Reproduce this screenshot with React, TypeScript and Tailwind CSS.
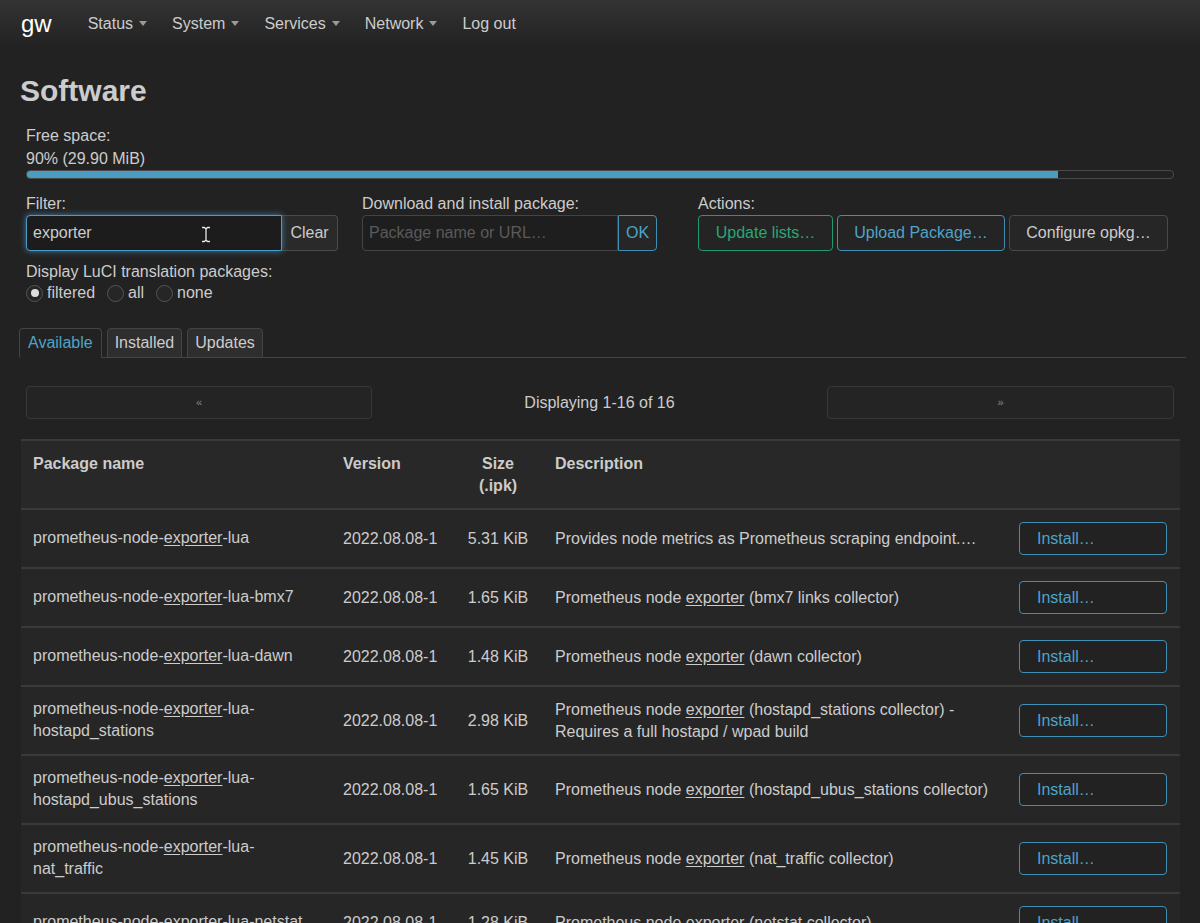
import React from 'react';

const rows = [
    { name: ['prometheus-node-', 'exporter', '-lua'], ver: '2022.08.08-1', size: '5.31 KiB', desc: ['Provides node metrics as Prometheus scraping endpoint.…'] },
    { name: ['prometheus-node-', 'exporter', '-lua-bmx7'], ver: '2022.08.08-1', size: '1.65 KiB', desc: ['Prometheus node ', 'exporter', ' (bmx7 links collector)'] },
    { name: ['prometheus-node-', 'exporter', '-lua-dawn'], ver: '2022.08.08-1', size: '1.48 KiB', desc: ['Prometheus node ', 'exporter', ' (dawn collector)'] },
    { name: ['prometheus-node-', 'exporter', '-lua-hostapd_stations'], ver: '2022.08.08-1', size: '2.98 KiB', desc: ['Prometheus node ', 'exporter', ' (hostapd_stations collector) - Requires a full hostapd / wpad build'] },
    { name: ['prometheus-node-', 'exporter', '-lua-hostapd_ubus_stations'], ver: '2022.08.08-1', size: '1.65 KiB', desc: ['Prometheus node ', 'exporter', ' (hostapd_ubus_stations collector)'] },
    { name: ['prometheus-node-', 'exporter', '-lua-nat_traffic'], ver: '2022.08.08-1', size: '1.45 KiB', desc: ['Prometheus node ', 'exporter', ' (nat_traffic collector)'] },
    { name: ['prometheus-node-', 'exporter', '-lua-netstat'], ver: '2022.08.08-1', size: '1.28 KiB', desc: ['Prometheus node ', 'exporter', ' (netstat collector)'] },
];

const Hl: React.FC<{ parts: string[] }> = ({ parts }) => (
    <>
        {parts.map((p, i) => (i % 2 === 1 ? <span key={i} className="underline underline-offset-2">{p}</span> : <span key={i}>{p}</span>))}
    </>
);

const Caret = () => <span className="ml-1.5 inline-block border-x-[4px] border-t-[5px] border-x-transparent border-t-[#9a9a9a] align-middle mb-[3px]" />;

// text cursor drawn over the filter field
const IBeam = () => (
    <svg className="absolute left-[174px] top-[10px]" width="10" height="17" viewBox="0 0 10 17">
        <path d="M1 1.5h2.5l1.5 1.5 1.5-1.5H9M5 3v11M1 15.5h2.5L5 14l1.5 1.5H9" fill="none" stroke="#111" strokeWidth="3" />
        <path d="M1 1.5h2.5l1.5 1.5 1.5-1.5H9M5 3v11M1 15.5h2.5L5 14l1.5 1.5H9" fill="none" stroke="#eee" strokeWidth="1.3" />
    </svg>
);

const Radio: React.FC<{ on?: boolean }> = ({ on }) => (
    <span className="w-[17px] h-[17px] rounded-full border border-[#555555] bg-[#262626] flex items-center justify-center mr-[4px]">
        {on && <span className="w-[8px] h-[8px] rounded-full bg-[#dddddd]" />}
    </span>
);

const App: React.FC = () => {
    return (
        <div className="min-h-screen bg-[#222222] text-[#cccccc] text-[16px]" style={{ fontFamily: '"Liberation Sans", Arial, sans-serif' }}>
            <header className="h-12 bg-gradient-to-b from-[#333333] to-[#222222] flex items-center px-[21px]">
                <span className="text-[24px] text-white mr-[36px] leading-none">gw</span>
                <nav className="flex items-center gap-[25px] text-[#cccccc]">
                    <span>Status<Caret /></span>
                    <span>System<Caret /></span>
                    <span>Services<Caret /></span>
                    <span>Network<Caret /></span>
                    <span>Log out</span>
                </nav>
            </header>

            <main className="px-[20px]">
                <h2 className="text-[30px] font-bold text-[#cccccc] mt-[25px] mb-[15px] leading-9">Software</h2>

                <div className="px-[6px]">
                    <div className="leading-[23px]">Free space:</div>
                    <div className="leading-[23px]">90% (29.90 MiB)</div>
                    <div className="h-[9px] border border-[#4a4a4a] rounded-[4px] overflow-hidden bg-[#222222]">
                        <div className="h-full bg-[#4a9dc0]" style={{ width: '90%' }} />
                    </div>

                    <div className="flex mt-[15px]">
                        <div className="w-[336px]">
                            <div className="leading-[20px]">Filter:</div>
                            <div className="flex h-[36px] mt-[1px]">
                                <div className="w-[256px] border border-[#4d9bc8] rounded-l-[4px] shadow-[0_0_6px_rgba(80,160,220,0.7)] bg-[#1c1c1c] flex items-center px-[6px] relative">
                                    exporter
                                    <IBeam />
                                </div>
                                <button className="w-[56px] border border-[#4a4a4a] border-l-0 rounded-r-[4px] bg-[#2a2a2a] text-[#cccccc]">Clear</button>
                            </div>
                        </div>
                        <div className="w-[336px]">
                            <div className="leading-[20px]">Download and install package:</div>
                            <div className="flex h-[36px] mt-[1px]">
                                <div className="w-[256px] border border-[#444444] rounded-l-[4px] bg-[#1e1e1e] flex items-center px-[6px] text-[#5a5a5a]">Package name or URL…</div>
                                <button className="w-[39px] border border-[#3f8fb5] rounded-r-[4px] bg-[#262626] text-[#4fa3c9]">OK</button>
                            </div>
                        </div>
                        <div>
                            <div className="leading-[20px]">Actions:</div>
                            <div className="flex gap-[4px] h-[36px] mt-[1px]">
                                <button className="w-[135px] border border-[#1f9b6d] rounded-[4px] bg-[#242424] text-[#27a874]">Update lists…</button>
                                <button className="w-[168px] border border-[#3f8fb5] rounded-[4px] bg-[#242424] text-[#4fa3c9]">Upload Package…</button>
                                <button className="w-[159px] border border-[#4a4a4a] rounded-[4px] bg-[#262626] text-[#cccccc]">Configure opkg…</button>
                            </div>
                        </div>
                    </div>

                    <div className="mt-[11px] leading-[20px]">Display LuCI translation packages:</div>
                    <div className="flex items-center mt-[1px] leading-[20px]">
                        <Radio on />
                        <span className="mr-[12px]">filtered</span>
                        <Radio />
                        <span className="mr-[12px]">all</span>
                        <Radio />
                        <span>none</span>
                    </div>
                </div>

                <div className="mt-[25px] flex items-end gap-[5px] border-b border-[#444444] -ml-[1px] mr-[-6px]">
                    <div className="h-[30px] px-[8px] flex items-center border border-[#444444] border-b-[#222222] -mb-px rounded-t-[4px] bg-[#222222] text-[#4fa3c9]">Available</div>
                    <div className="h-[30px] px-[7px] flex items-center border border-[#444444] -mb-px rounded-t-[4px] bg-[#2e2e2e]">Installed</div>
                    <div className="h-[30px] px-[7px] flex items-center border border-[#444444] -mb-px rounded-t-[4px] bg-[#2e2e2e]">Updates</div>
                </div>

                <div className="flex items-center justify-between mt-[28px] px-[6px]">
                    <div className="w-[346px] h-[33px] border border-[#383838] rounded-[4px] bg-[#242424] flex items-center justify-center text-[11px] text-[#888888]">«</div>
                    <div>Displaying 1-16 of 16</div>
                    <div className="w-[347px] h-[33px] border border-[#383838] rounded-[4px] bg-[#242424] flex items-center justify-center text-[11px] text-[#888888]">»</div>
                </div>

                <table className="mt-[20px] w-[1159px] ml-[1px] border-collapse table-fixed">
                    <colgroup>
                        <col className="w-[310px]" />
                        <col className="w-[122px]" />
                        <col className="w-[90px]" />
                        <col className="w-[464px]" />
                        <col className="w-[173px]" />
                    </colgroup>
                    <thead>
                        <tr className="bg-[#282828] border-t-2 border-[#3a3a3a] font-bold text-left align-top">
                            <th className="px-[12px] pt-[12px] pb-[11px] leading-[22px]">Package name</th>
                            <th className="px-[12px] pt-[12px] pb-[11px] leading-[22px]">Version</th>
                            <th className="px-[12px] pt-[12px] pb-[11px] leading-[22px] text-center">Size<br />(.ipk)</th>
                            <th className="px-[12px] pt-[12px] pb-[11px] leading-[22px]">Description</th>
                            <th />
                        </tr>
                    </thead>
                    <tbody>
                        {rows.map((r, i) => (
                            <tr key={i} className="bg-[#262626] border-t-2 border-[#3a3a3a] align-middle">
                                <td className="px-[12px] pt-[11px] pb-[12px] leading-[22px]"><Hl parts={r.name} /></td>
                                <td className="px-[12px] leading-[22px]">{r.ver}</td>
                                <td className="px-[12px] leading-[22px] text-center whitespace-nowrap">{r.size}</td>
                                <td className="px-[12px] leading-[22px]"><Hl parts={r.desc} /></td>
                                <td className="px-[12px] py-[12px]">
                                    <button className="w-[148px] h-[33px] border border-[#3f8fb5] rounded-[4px] bg-[#222222] text-[#4fa3c9] text-left pl-[17px] block">Install…</button>
                                </td>
                            </tr>
                        ))}
                    </tbody>
                </table>
            </main>
        </div>
    );
};

export default App;
